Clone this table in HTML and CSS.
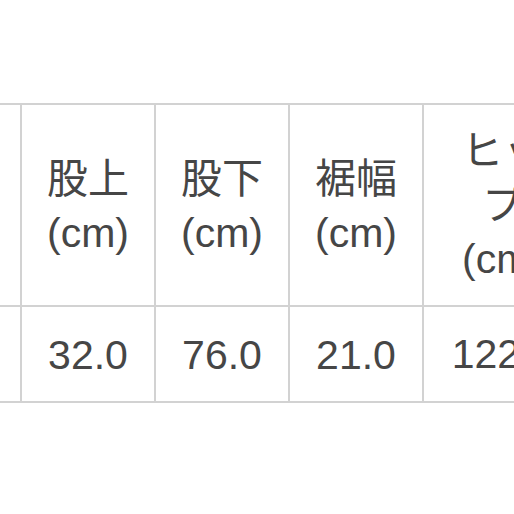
FILE: index.html
```html
<!DOCTYPE html>
<html lang="ja">
<head>
<meta charset="utf-8">
<link rel="stylesheet" href="styles.css">
</head>
<body>
<div class="frame">
  <table class="size-table">
    <colgroup>
      <col class="c-std"><col class="c-std"><col class="c-std"><col class="c-std"><col class="c-wide">
    </colgroup>
    <tr class="head">
      <td></td>
      <td>股上<br>(cm)</td>
      <td>股下<br>(cm)</td>
      <td>裾幅<br>(cm)</td>
      <td class="wide">ヒップ<br>(cm)</td>
    </tr>
    <tr class="data">
      <td></td>
      <td>32.0</td>
      <td>76.0</td>
      <td>21.0</td>
      <td class="wide">122.0</td>
    </tr>
  </table>
</div>
</body>
</html>
```
FILE: styles.css
```css
html, body {
  margin: 0;
  padding: 0;
  background: #ffffff;
}
.frame {
  width: 514px;
  height: 514px;
  overflow: hidden;
  padding-top: 103px;
  box-sizing: border-box;
}
.size-table {
  margin-left: -112px;
  border-collapse: separate;
  border-spacing: 0;
  table-layout: fixed;
  width: 696px;
  border-top: 2px solid #d2d2d2;
  font-family: "Liberation Sans", "Noto Sans CJK JP", sans-serif;
  font-size: 41px;
  line-height: 54px;
  color: #464646;
}
.c-std { width: 134px; }
.c-wide { width: 160px; }
.size-table td {
  border-right: 2px solid #d2d2d2;
  border-bottom: 2px solid #d2d2d2;
  text-align: center;
  vertical-align: middle;
  padding: 0 6px;
  box-sizing: border-box;
}
.size-table td.wide {
  padding: 0 20px;
}
.head td {
  height: 202px;
  padding-top: 2px;
}
.data td {
  height: 96px;
  padding-top: 2px;
}
```
